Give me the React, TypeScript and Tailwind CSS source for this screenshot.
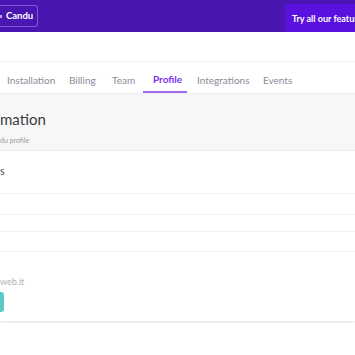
import React from "react";

export default function App() {
  const tab = "flex items-center pt-[5px] text-[#8b8b99] text-[10px]";
  return (
    <div className="w-[355px] h-[355px] overflow-hidden bg-white" style={{ fontFamily: "Lato, 'Open Sans', sans-serif" }}>
      {/* Header */}
      <div className="h-[32px] bg-[#4a16b2] flex items-start justify-between">
        <div className="mt-[5px] h-[22px] w-[38px] border border-[#7a5bd0] border-l-0 rounded-r-[3px] flex items-center gap-[4px]">
          <span className="w-[2px] h-[3px] bg-[#c7a8f0] mt-[1px]" />
          <span className="text-white text-[9.5px] font-bold leading-none">Candu</span>
        </div>
        <div className="mt-[4px] h-[28px] w-[70px] bg-[#5a10df] flex items-center pl-[7px] overflow-hidden">
          <span className="text-white text-[9px] font-bold whitespace-nowrap leading-none">Try all our features</span>
        </div>
      </div>
      {/* white gap */}
      <div className="h-[30px] bg-white border-b border-[#f0f0f2]" />
      {/* Tabs */}
      <div className="h-[32px] bg-white border-b border-[#ececf0] flex items-stretch pl-[7px]">
        <div className={`${tab} w-[62px]`}>Installation</div>
        <div className={`${tab} w-[43px]`}>Billing</div>
        <div className={`${tab} w-[31px]`}>Team</div>
        <div className="w-[44px] mr-[10px] pl-[10px] pt-[5px] flex items-center border-b-2 border-[#9f6bf2] text-[#7a2ff0] font-bold text-[10px]">
          Profile
        </div>
        <div className={`${tab} w-[66px]`}>Integrations</div>
        <div className={`${tab} w-[60px]`}>Events</div>
      </div>
      {/* Section header */}
      <div className="h-[57px] bg-[#f7f7f7] border-b border-[#ededed] pt-[18px]">
        <div className="text-[15px] text-[#3b3b45] leading-none">mation</div>
        <div className="text-[7px] text-[#9a9aa5] mt-[10px] leading-none">du profile</div>
      </div>
      {/* Card */}
      <div className="bg-white h-[170px] shadow-[0_1px_2px_rgba(0,0,0,0.12)] flex flex-col">
        <div className="h-[42px] pt-[14px] text-[11px] text-[#4b4b55] leading-none">s</div>
        <div className="h-[22px] border-y border-[#f0f0f0]" />
        <div className="h-[16px]" />
        <div className="h-[21px] border-y border-[#f2f2f2]" />
        <div className="h-[26px] pt-[25px] text-[9px] text-[#b0b0b8] leading-none">web.it</div>
        <div className="mt-[14px] h-[20px] w-[4px] bg-[#5cc9c9] rounded-r-[3px]" />
      </div>
    </div>
  );
}
